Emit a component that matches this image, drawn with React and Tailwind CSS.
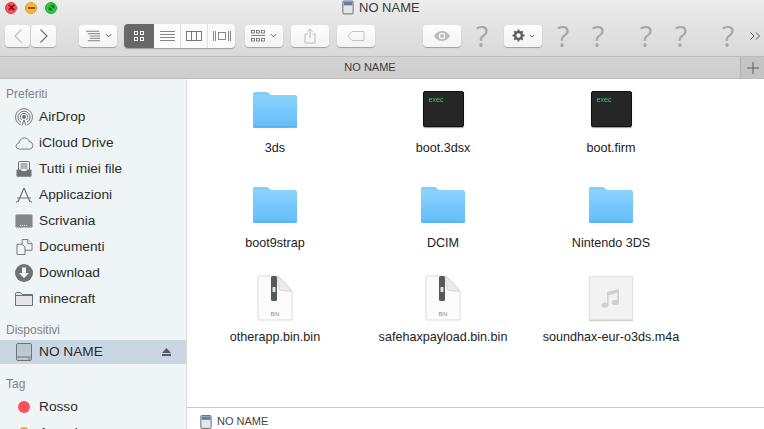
const font = { fontFamily: '"Liberation Sans", Arial, sans-serif' };

const Btn = ({ className = '', children }) => (
  <div className={`flex h-[22px] items-center justify-center rounded-[4px] bg-gradient-to-b from-[#fdfdfd] to-[#f3f3f3] shadow-[0_1px_1px_rgba(0,0,0,0.28)] ${className}`}>
    {children}
  </div>
);

const Question = ({ className = '' }) => (
  <span className={`flex w-[20px] shrink-0 justify-center text-[29px] leading-[30px] text-[#a8a8a8] ${className}`} style={{ fontFamily: '"Open Sans", sans-serif' }}>?</span>
);

const Light = ({ color, border, glyph }) => (
  <div className="flex h-[12px] w-[12px] items-center justify-center rounded-full border" style={{ background: color, borderColor: border }}>
    {glyph}
  </div>
);

const SmallDrive = ({ className = '' }) => (
  <svg viewBox="0 0 14 16" className={className}>
    <rect x="1" y="0.5" width="12" height="15" rx="1.2" fill="#e4e6e8" stroke="#55595e" />
    <rect x="2" y="1.5" width="10" height="4" fill="#5f7ea8" />
  </svg>
);

const Toolbar = () => (
  <div className="flex h-[38px] items-center pl-[5px] pt-[3px]">
    <div className="flex gap-px">
      <Btn className="w-[25px]">
        <svg viewBox="0 0 10 16" className="h-[16px] w-[10px]"><path d="M8.500 1.500 2 8l6.500 6.500" fill="none" stroke="#bdbdbd" strokeWidth="1.200" /></svg>
      </Btn>
      <Btn className="w-[25px]">
        <svg viewBox="0 0 10 16" className="h-[16px] w-[10px]"><path d="M1.500 1.500 8 8l-6.500 6.500" fill="none" stroke="#737373" strokeWidth="1.200" /></svg>
      </Btn>
    </div>
    <Btn className="ml-[23px] w-[38px] gap-[3px]">
      <svg viewBox="0 0 18 12" className="h-[12px] w-[17px]" stroke="#6d6d6d" strokeWidth="0.9">
        <path d="M1 1h14M3 3.500h13M5 6h11M5 8.500h11M3 11h13" />
      </svg>
      <svg viewBox="0 0 8 5" className="h-[5px] w-[7px]"><path d="m1 1 3 3 3-3" fill="none" stroke="#555" strokeWidth="1.100" /></svg>
    </Btn>
    <div className="ml-[7px] flex h-[24px] w-[111px] overflow-hidden rounded-[4px] bg-[#fbfbfb] shadow-[0_1px_1px_rgba(0,0,0,0.28)]">
      <div className="flex w-[30px] items-center justify-center bg-[#686868]">
        <svg viewBox="0 0 10 10" className="h-[10px] w-[10px]" fill="none" stroke="#f4f4f4">
          <rect x="0.500" y="0.500" width="3" height="3" /><rect x="6.500" y="0.500" width="3" height="3" />
          <rect x="0.500" y="6.500" width="3" height="3" /><rect x="6.500" y="6.500" width="3" height="3" />
        </svg>
      </div>
      <div className="flex w-[27px] items-center justify-center border-r border-[#e0e0e0]">
        <svg viewBox="0 0 15 10" className="h-[10px] w-[15px]" stroke="#6a6a6a" strokeWidth="0.8"><path d="M0 .5h15M0 3.500h15M0 6.500h15M0 9.500h15" /></svg>
      </div>
      <div className="flex w-[27px] items-center justify-center border-r border-[#e0e0e0]">
        <svg viewBox="0 0 16 10" className="h-[10px] w-[16px]" fill="none" stroke="#6a6a6a" strokeWidth="0.9"><rect x="0.500" y="0.500" width="15" height="9" /><path d="M5.500 0v10M10.500 0v10" /></svg>
      </div>
      <div className="flex w-[27px] items-center justify-center">
        <svg viewBox="0 0 18 10" className="h-[10px] w-[18px]" fill="none" stroke="#6a6a6a" strokeWidth="0.8"><rect x="5.500" y="1.500" width="7" height="7" /><path d="M.5 0v10M2.500 0v10M15.500 0v10M17.500 0v10" /></svg>
      </div>
    </div>
    <Btn className="ml-[10px] w-[38px] gap-[5px]">
      <svg viewBox="0 0 14 12" className="h-[12px] w-[14px]" fill="none" stroke="#6a6a6a" strokeWidth="0.8">
        <rect x="0.500" y="0.500" width="3" height="2.500" /><rect x="5.500" y="0.500" width="3" height="2.500" /><rect x="10.500" y="0.500" width="3" height="2.500" />
        <path d="M0 5.500h14" />
        <rect x="0.500" y="8.500" width="3" height="2.500" /><rect x="5.500" y="8.500" width="3" height="2.500" /><rect x="10.500" y="8.500" width="3" height="2.500" />
      </svg>
      <svg viewBox="0 0 8 5" className="h-[5px] w-[7px]"><path d="m1 1 3 3 3-3" fill="none" stroke="#555" strokeWidth="1.100" /></svg>
    </Btn>
    <Btn className="ml-[8px] w-[38px]">
      <svg viewBox="0 0 12 16" className="h-[16px] w-[12px]" fill="none" stroke="#bcbcbc"><path d="M3.500 6H1v9h10V6H8.500M6 10V1M3.500 3.500 6 1l2.500 2.500" /></svg>
    </Btn>
    <Btn className="ml-[8px] w-[38px]">
      <svg viewBox="0 0 18 10" className="h-[10px] w-[18px]" fill="none" stroke="#c4c4c4"><path d="M5 .5h12v9H5L.8 5z" /></svg>
    </Btn>
    <Btn className="ml-[48px] w-[38px]">
      <svg viewBox="0 0 18 12" className="h-[12px] w-[18px]"><path d="M1 6c2-3.400 5-5 8-5s6 1.600 8 5c-2 3.400-5 5-8 5S3 9.400 1 6z" fill="#bcbcbc" /><circle cx="9" cy="6" r="3.200" fill="#fafafa" /><circle cx="9" cy="6" r="2" fill="#bcbcbc" /></svg>
    </Btn>
    <Question className="ml-[11px]" />
    <Btn className="ml-[12px] w-[38px] gap-[4px]">
      <svg viewBox="0 0 14 14" className="h-[13px] w-[13px]">
        <circle cx="7" cy="7" r="3.700" fill="none" stroke="#5f5f5f" strokeWidth="2.600" />
        <path d="M7 .5v3M7 10.500v3M.5 7h3M10.500 7h3M2.400 2.400l2 2M9.600 9.600l2 2M2.400 11.600l2-2M9.600 4.400l2-2" stroke="#5f5f5f" strokeWidth="2" />
      </svg>
      <svg viewBox="0 0 8 5" className="h-[4px] w-[6px]"><path d="m1 1 3 3 3-3" fill="none" stroke="#555" strokeWidth="1.100" /></svg>
    </Btn>
    <Question className="ml-[11px]" />
    <Question className="ml-[15px]" />
    <Question className="ml-[28px]" />
    <Question className="ml-[15px]" />
    <Question className="ml-[27px]" />
    <svg viewBox="0 0 11 8" className="ml-[12px] h-[8px] w-[11px]" fill="none" stroke="#555"><path d="m.5.5 3.500 3.500-3.500 3.500M6 .5 9.500 4 6 7.500" /></svg>
  </div>
);

const SideRow = ({ icon, label, active, right }) => (
  <div className={`flex items-center pl-[12px] text-[13.7px] text-[#2b2b2b] ${active ? 'h-[24px] bg-[#c8d7e3]' : 'h-[26px]'}`}>
    <div className="flex w-[24px] justify-center">{icon}</div>
    <span className="ml-[3px] flex-1">{label}</span>
    {right}
  </div>
);

const gray = '#6f7274';
const sideItems = [
  ['AirDrop', (
    <svg viewBox="0 0 18 18" className="h-[18px] w-[18px]" fill="none" stroke={gray} strokeWidth="1">
      <path d="M5.600 16.800a8.400 8.400 0 1 1 6.800 0" /><path d="M6 14.400a6 6 0 1 1 6 0" /><path d="M6.800 12a3.700 3.700 0 1 1 4.400 0" />
      <circle cx="9" cy="9" r="1.500" fill={gray} /><path d="M7 17.500 9 12l2 5.500" />
    </svg>
  )],
  ['iCloud Drive', (
    <svg viewBox="0 0 20 14" className="h-[13px] w-[19px]" fill="none" stroke={gray}><path d="M4.500 13C2.300 13 1 11.500 1 9.800 1 8 2.400 6.900 3.800 6.800 4.300 3.500 6.800 1 10 1c2.800 0 4.800 1.900 5.300 4.300 2.200 0 3.700 1.900 3.700 3.900 0 2.100-1.500 3.800-3.700 3.800z" /></svg>
  )],
  ['Tutti i miei file', (
    <svg viewBox="0 0 16 16" className="h-[16px] w-[16px]">
      <rect x="2.500" y="0.500" width="11" height="10" rx="1" fill="#f1f3f4" stroke={gray} />
      <path d="M4.500 3h7M4.500 5h7M4.500 7h7" stroke={gray} />
      <path d="M0.500 8.500h4.500l1 2h4l1-2h4.500V15a.8.8 0 0 1-.8.8H1.300a.8.8 0 0 1-.8-.8z" fill={gray} />
    </svg>
  )],
  ['Applicazioni', (
    <svg viewBox="0 0 18 16" className="h-[16px] w-[18px]" fill="none" stroke={gray}>
      <path d="M9 1 3 15M9 1l6 14M2 11h14" strokeWidth="1.200" /><path d="M1 15.500 3 14M17 15.500 15 14" />
    </svg>
  )],
  ['Scrivania', (
    <svg viewBox="0 0 18 14" className="h-[14px] w-[18px]">
      <rect x="0.500" y="0.500" width="17" height="13" rx="1.500" fill="#83878a" stroke="#b4b7b9" />
      <path d="M5 11.500h8" stroke="#eee" strokeDasharray="1 1" />
    </svg>
  )],
  ['Documenti', (
    <svg viewBox="0 0 17 17" className="h-[16px] w-[17px]" fill="#f1f3f4" stroke={gray}>
      <path d="M6 .5h6l4.500 4.500V12H6z" /><path d="M.5 5.500H6l3 3v8H.5z" /><path d="M12 .5V5h4.500" />
    </svg>
  )],
  ['Download', (
    <svg viewBox="0 0 18 18" className="h-[18px] w-[18px]">
      <circle cx="9" cy="9" r="9" fill={gray} />
      <path d="M7 3.500h4V9h3l-5 5-5-5h3z" fill="#f1f5f7" />
    </svg>
  )],
  ['minecraft', (
    <svg viewBox="0 0 18 14" className="h-[14px] w-[18px]" fill="#e4e6e8" stroke={gray}>
      <path d="M.5 13.500V1.500a1 1 0 0 1 1-1h4l1.500 2h10.500v11z" /><path d="M.5 3.500h17" />
    </svg>
  )],
];

const Folder = () => (
  <svg viewBox="0 0 46 38" className="h-[38px] w-[46px]">
    <defs>
      <linearGradient id="fb" x1="0" y1="0" x2="0" y2="1">
        <stop offset="0" stopColor="#8ad4fd" /><stop offset="1" stopColor="#62bcf9" />
      </linearGradient>
    </defs>
    <path d="M1 4a2 2 0 0 1 2-2h11c2 0 3 1 4 2.500L19 5H1z" fill="#7fcdfb" />
    <path d="M1 5h42a2 2 0 0 1 2 2v29a2 2 0 0 1-2 2H3a2 2 0 0 1-2-2z" fill="url(#fb)" />
    <path d="M1 36.800h44" stroke="#57aee8" />
  </svg>
);

const Exec = () => (
  <div className="h-[36px] w-[41px] rounded-[2px] border border-[#111] bg-[#262626] pl-[5px] pt-[3px] text-[7px] leading-[9px] text-[#4fbf62] shadow-[0_1px_1px_rgba(0,0,0,0.4)]">
    exec
  </div>
);

const Bin = () => (
  <svg viewBox="0 0 36 46" className="h-[46px] w-[36px]">
    <path d="M1 1h20l14 15v29H1z" fill="#fbfbfb" stroke="#dcdcdc" />
    <path d="M21 1c0 8 1 13 2 14 2 1 8 1 12 1z" fill="#ececec" stroke="#d2d2d2" />
    <rect x="14" y="1" width="6" height="25" rx="1.500" fill="#55585c" />
    <rect x="15.500" y="12" width="3" height="5" fill="#e2e2e2" />
    <text x="18" y="41" textAnchor="middle" fontSize="5.500" fill="#8c8c8c" fontFamily="Liberation Sans">BIN</text>
  </svg>
);

const Audio = () => (
  <div className="flex h-[44px] w-[44px] items-center justify-center border border-[#e2e2e2] bg-[#f2f2f2] shadow-[0_1px_1px_rgba(0,0,0,0.2)]">
    <svg viewBox="0 0 20 20" className="h-[20px] w-[20px]" fill="#d0d0d0">
      <path d="M6 4 18 1v13h-1.600V5L7.600 7.200V17H6z" />
      <ellipse cx="4" cy="17" rx="3.600" ry="2.600" /><ellipse cx="14.400" cy="14.400" rx="3.600" ry="2.600" />
    </svg>
  </div>
);

const files = [
  ['3ds', <Folder />], ['boot.3dsx', <Exec />], ['boot.firm', <Exec />],
  ['boot9strap', <Folder />], ['DCIM', <Folder />], ['Nintendo 3DS', <Folder />],
  ['otherapp.bin.bin', <Bin />], ['safehaxpayload.bin.bin', <Bin />], ['soundhax-eur-o3ds.m4a', <Audio />],
];

export default function App() {
  return (
    <div className="flex h-[429px] w-[764px] flex-col overflow-hidden bg-white" style={font}>
      {/* title + toolbar */}
      <div className="h-[56px] shrink-0 bg-gradient-to-b from-[#ececec] to-[#d9d9d9]">
        <div className="relative flex h-[15px] items-center gap-[8px] pl-[5px]">
          <Light color="#f9505a" border="#e23d45" glyph={<svg viewBox="0 0 8 8" className="h-[7px] w-[7px]"><path d="m1 1 6 6M7 1 1 7" stroke="#7a1017" strokeWidth="1.800" /></svg>} />
          <Light color="#fab43c" border="#e0982a" glyph={<div className="h-[2px] w-[7px] bg-[#8f5a08]" />} />
          <Light color="#2cc63f" border="#1fa92f" glyph={<svg viewBox="0 0 8 8" className="h-[7px] w-[7px]"><path d="M1 7V2.500L5.500 7zM7 1v4.500L2.500 1z" fill="#0a5c17" /></svg>} />
          <div className="absolute left-[342px] top-0 flex items-center gap-[5px] text-[13px] leading-[15px] text-[#3a3a3a]">
            <SmallDrive className="h-[15px] w-[12px]" />
            <span>NO NAME</span>
          </div>
        </div>
        <Toolbar />
      </div>

      {/* tab bar */}
      <div className="flex h-[23px] shrink-0 border-y border-[#bcbcbc] bg-gradient-to-b from-[#d3d3d3] to-[#cdcdcd] text-[11px] text-[#3d3d3d]">
        <div className="flex flex-1 items-center justify-center">NO NAME</div>
        <div className="flex w-[24px] items-center justify-center border-l border-[#b0b0b0] bg-[#c4c4c4]">
          <svg viewBox="0 0 12 12" className="h-[12px] w-[12px]"><path d="M6 0v12M0 6h12" stroke="#5c5c5c" /></svg>
        </div>
      </div>

      <div className="flex min-h-0 flex-1">
        {/* sidebar */}
        <div className="w-[187px] shrink-0 overflow-hidden border-r border-[#dcdcdc] bg-[#eff5f7]">
          <div className="pl-[6px] pt-[8px] text-[12px] leading-[14px] text-[#7f8285]">Preferiti</div>
          <div className="mt-[3px]">
            {sideItems.map(([label, icon]) => <SideRow key={label} icon={icon} label={label} />)}
          </div>
          <div className="mt-[11px] pl-[6px] text-[12px] leading-[14px] text-[#7f8285]">Dispositivi</div>
          <div className="mt-[3px]">
            <SideRow
              active
              label="NO NAME"
              icon={(
                <svg viewBox="0 0 16 18" className="h-[18px] w-[16px]">
                  <rect x="0.500" y="0.500" width="15" height="17" rx="1.500" fill="#bdc8d1" stroke="#6f7478" />
                  <path d="M1 14h14" stroke="#6f7478" />
                  <circle cx="13" cy="16" r="0.700" fill="#555" />
                </svg>
              )}
              right={(
                <svg viewBox="0 0 9 8" className="mr-[15px] h-[8px] w-[9px]" fill="#56595c"><path d="M4.500 0 9 5H0zM0 6h9v2H0z" /></svg>
              )}
            />
          </div>
          <div className="mt-[13px] pl-[6px] text-[12px] leading-[14px] text-[#7f8285]">Tag</div>
          <div className="mt-[3px]">
            <SideRow label="Rosso" icon={<div className="h-[12px] w-[12px] rounded-full bg-[#f9505a]" />} />
            <SideRow label="Arancione" icon={<div className="h-[12px] w-[12px] rounded-full bg-[#f6a13d]" />} />
          </div>
        </div>

        {/* files + status bar */}
        <div className="flex min-w-0 flex-1 flex-col">
          <div className="grid flex-1 grid-cols-[168px_168px_168px] content-start pl-[4px] pt-[7px]">
            {files.map(([name, icon]) => (
              <div key={name} className="flex h-[94.5px] flex-col items-center">
                <div className="flex h-[46px] w-full items-center justify-center">{icon}</div>
                <span className="mt-[8px] text-[12.6px] leading-[16px] whitespace-nowrap text-[#222]">{name}</span>
              </div>
            ))}
          </div>
          <div className="flex h-[22px] shrink-0 items-center gap-[5px] border-t border-[#c8c8c8] bg-white pl-[13px] pt-[6px] text-[11px] text-[#444]">
            <SmallDrive className="h-[14px] w-[12px]" />
            <span>NO NAME</span>
          </div>
        </div>
      </div>
    </div>
  );
}
